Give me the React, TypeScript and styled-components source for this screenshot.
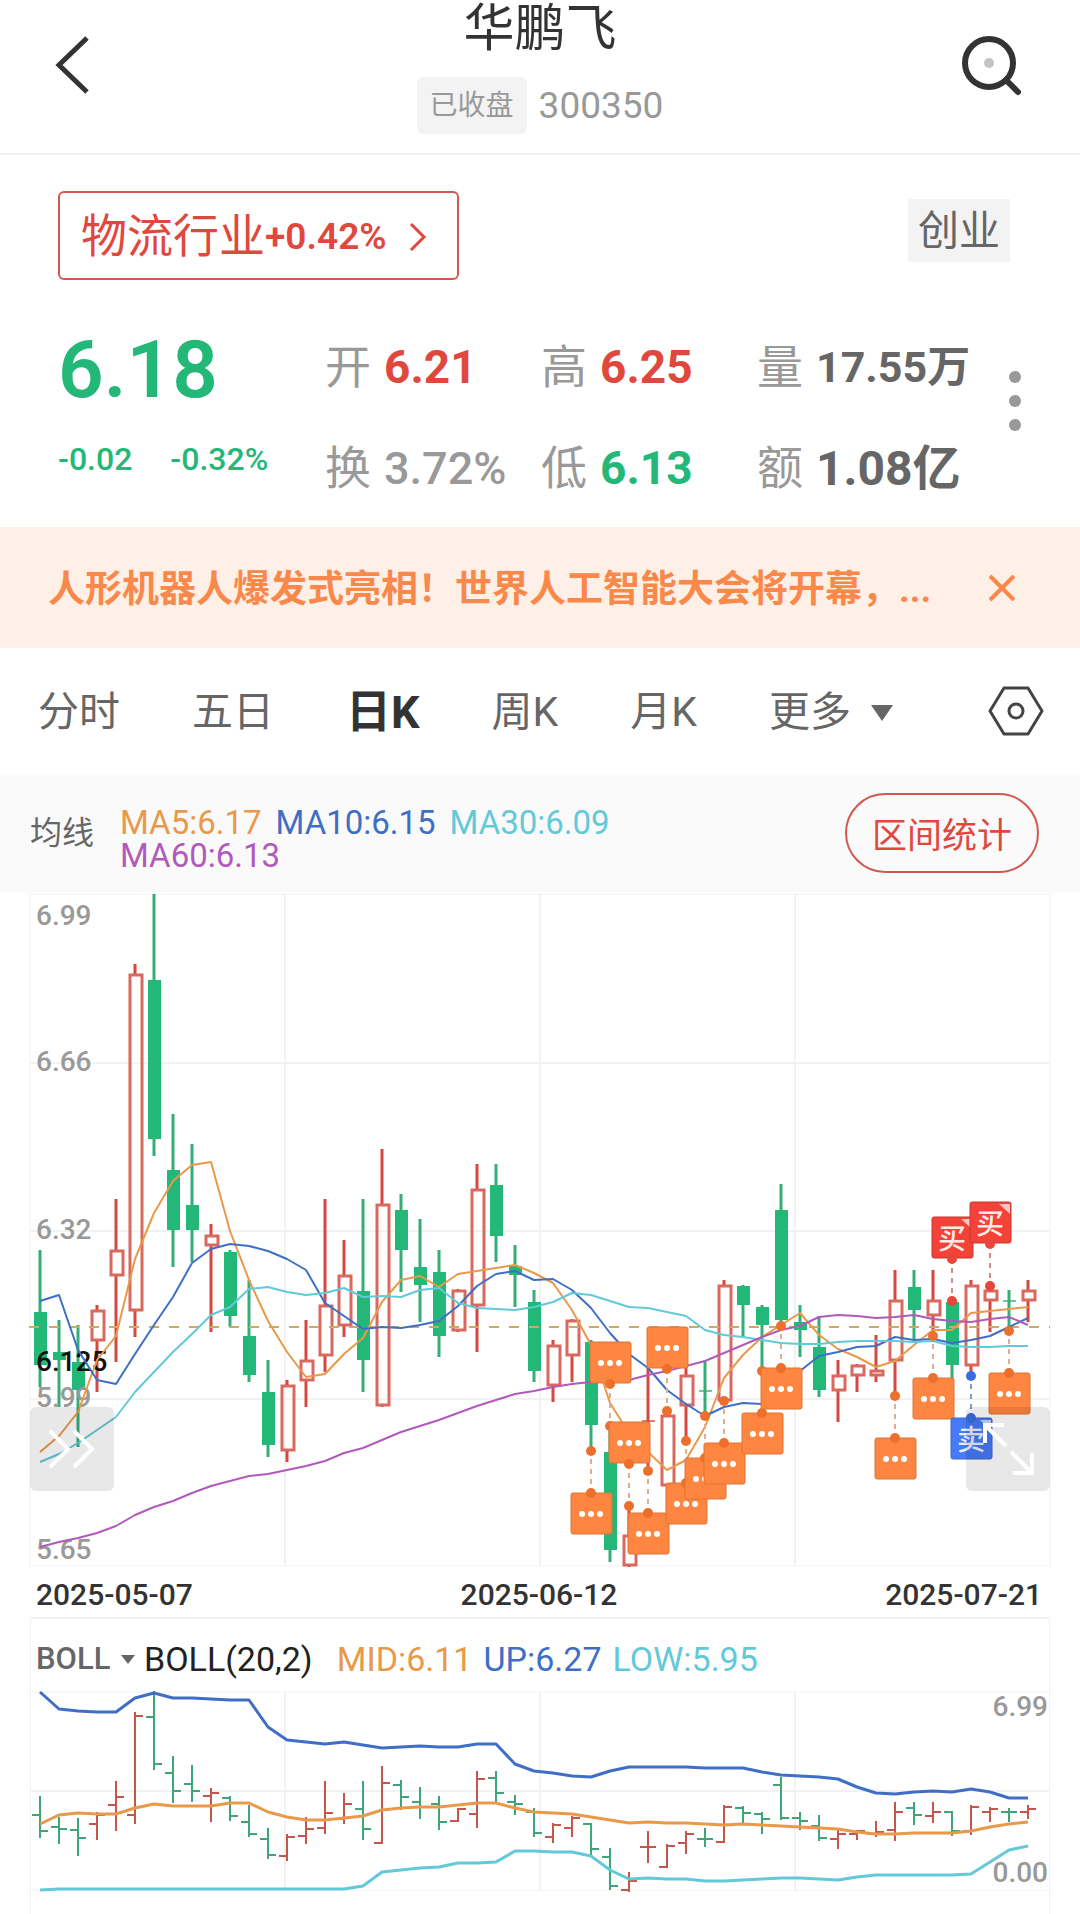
import React from "react";
import styled, { createGlobalStyle } from "styled-components";

const RED = "#e0483e";
const GREEN = "#23b877";
const ORANGE = "#e8994a";
const BLUE = "#3f6fc4";
const CYAN = "#62c9d8";
const PURPLE = "#b15abb";
const GRID = "#f2f2f2";

const textFont = `Roboto, "Noto Sans CJK SC", sans-serif`;

const GlobalStyle = createGlobalStyle`
  *, *::before, *::after { box-sizing: border-box; }
  body { margin: 0; background: #fff; color: #666; font-family: ${textFont}; line-height: 1.2; }
  button, select { margin: 0; padding: 0; border: 0; background: none; color: inherit; font: inherit; cursor: pointer; }
  svg { display: block; }
  h1, p, dl, dd, dt { margin: 0; font-weight: 400; }
`;

/* ---------- header ---------- */

const Header = styled.header`
  display: grid;
  grid-template-columns: 1fr auto 1fr;
  height: 155px;
  border-bottom: 2px solid ${GRID};
`;

const HeaderSide = styled.div<{ $end?: boolean }>`
  display: flex;
  align-items: center;
  justify-content: ${(p) => (p.$end ? "flex-end" : "flex-start")};
  padding: 0 56px 24px 54px;
`;

const TitleBlock = styled.div`
  display: flex;
  flex-direction: column;
  align-items: center;
  gap: 19px;
`;

const Title = styled.h1`
  color: #333;
  font-size: 51px;
  line-height: 58px;
`;

const CodeRow = styled.div`
  display: flex;
  align-items: center;
  gap: 12px;
  color: #999;
  font-size: 37px;
  line-height: 57px;
`;

const StatusBadge = styled.span`
  padding: 0 13px;
  border-radius: 6px;
  background: #f3f3f3;
  font-size: 28px;
`;

/* ---------- quote summary ---------- */

const Summary = styled.section`
  padding: 36px 40px 8px 58px;
`;

const TagRow = styled.div`
  display: flex;
  align-items: flex-start;
  justify-content: space-between;
  margin-bottom: 35px;
  padding-right: 30px;
`;

const IndustryLink = styled.a`
  display: flex;
  align-items: center;
  height: 89px;
  padding: 3px 30px 0 21px;
  border: 2px solid #d2584f;
  border-radius: 6px;
  color: ${RED};
  font-size: 46px;
  text-decoration: none;

  b {
    margin-right: 22px;
    font-size: 37px;
    font-weight: 600;
  }
`;

const BoardTag = styled.span`
  margin-top: 8px;
  padding: 2px 10px 0;
  background: #f3f3f3;
  font-size: 41px;
  line-height: 61px;
`;

const QuoteGrid = styled.div`
  display: grid;
  grid-template-columns: 267fr 216fr 216fr 233fr 50px;
`;

const PriceColumn = styled.div`
  color: ${GREEN};
`;

const Price = styled.p`
  font-size: 80px;
  font-weight: 600;
  line-height: 110px;
`;

const Changes = styled.p`
  display: flex;
  gap: 38px;
  font-size: 32px;
  font-weight: 500;
  line-height: 68px;
`;

const StatColumn = styled.dl`
  padding-top: 2px;
  white-space: nowrap;
`;

const Stat = styled.div`
  display: flex;
  align-items: center;
  gap: 13px;
  height: 101px;
`;

const StatName = styled.dt`
  color: #999;
  font-size: 46px;
`;

const StatValue = styled.dd<{ $color: string; $size?: number; $weight?: number }>`
  color: ${(p) => p.$color};
  font-size: ${(p) => p.$size ?? 46}px;
  font-weight: ${(p) => p.$weight ?? 700};
`;

const MoreButton = styled.button`
  display: flex;
  align-items: center;
  justify-content: center;
  height: 172px;
`;

/* ---------- news banner ---------- */

const Banner = styled.aside`
  display: flex;
  align-items: center;
  justify-content: space-between;
  height: 121px;
  padding: 0 64px 0 48px;
  background: #fff0e7;
  color: #f9884b;
  font-size: 37px;
`;

const BannerText = styled.p`
  padding-top: 6px;
  font-weight: 700;
  white-space: nowrap;
`;

/* ---------- period tabs ---------- */

const Tabs = styled.nav`
  display: flex;
  align-items: center;
  gap: 72px;
  height: 126px;
  padding: 0 36px 0 38px;
`;

const Tab = styled.button<{ $active?: boolean }>`
  display: flex;
  align-items: center;
  gap: 20px;
  padding-top: 4px;
  color: ${(p) => (p.$active ? "#333" : "#666")};
  font-size: ${(p) => (p.$active ? 45 : 41)}px;
  font-weight: ${(p) => (p.$active ? 700 : 400)};
`;

const SettingsButton = styled.button`
  margin-left: auto;
`;

/* ---------- moving averages ---------- */

const AverageBar = styled.section`
  display: flex;
  align-items: center;
  height: 118px;
  padding: 0 41px 0 30px;
  background: #fafafa;
`;

const AverageName = styled.span`
  margin-right: 26px;
  font-size: 32px;
`;

const AverageList = styled.div`
  display: flex;
  flex: 1;
  flex-wrap: wrap;
  column-gap: 14px;
  max-width: 520px;
  padding-top: 12px;
  font-size: 33px;
  line-height: 33px;
`;

const Tinted = styled.span<{ $color: string }>`
  color: ${(p) => p.$color};
`;

const RangeButton = styled.button`
  height: 80px;
  margin-left: auto;
  padding: 8px 25px 0;
  border: 2px solid #d2584f;
  border-radius: 40px;
  color: ${RED};
  font-size: 35px;
`;

/* ---------- charts ---------- */

const ChartArea = styled.section`
  position: relative;
  margin: 2px 30px 0;

  svg.plot { width: 100%; height: auto; overflow: visible; }
`;

const OverlayButton = styled.button<{ $end?: boolean }>`
  position: absolute;
  bottom: 75px;
  ${(p) => (p.$end ? "right: 0;" : "left: 0;")}
  display: flex;
  align-items: center;
  justify-content: center;
  width: 84px;
  height: 84px;
  border-radius: 6px;
  background: rgba(0, 0, 0, 0.09);
`;

const DateRow = styled.div`
  display: flex;
  align-items: center;
  justify-content: space-between;
  height: 51px;
  padding: 7px 38px 0 36px;
  color: #333;
  font-size: 30px;
  font-weight: 500;
`;

const BollPanel = styled.section`
  margin: 0 30px;
  padding-bottom: 24px;
  border: solid ${GRID};
  border-width: 2px 1px 0;

  svg.plot { width: 100%; height: auto; overflow: visible; }
`;

const BollHeader = styled.div`
  display: flex;
  align-items: center;
  height: 72px;
  padding: 8px 0 0 5px;
  font-size: 34px;
`;

const IndicatorPicker = styled.label`
  display: flex;
  align-items: center;
  gap: 8px;
  margin-right: 9px;
`;

const IndicatorSelect = styled.select`
  width: 77px;
  appearance: none;
  color: #666;
  font-size: 31px;
  font-weight: 500;
`;

const Formula = styled.span`
  margin-right: 24px;
  color: #222;
`;

const BollValues = styled.div`
  display: flex;
  gap: 11px;
`;

/* ---------- chart data: high, body top, body bottom, low, direction ---------- */

type Candle = [number, number, number, number, "u" | "d"];

const candles: Candle[] = [
  [1250, 1312, 1365, 1387, "d"], [1320, 1352, 1360, 1407, "d"], [1325, 1362, 1390, 1447, "d"],
  [1305, 1310, 1341, 1392, "u"], [1199, 1250, 1276, 1362, "u"], [964, 974, 1311, 1337, "u"],
  [894, 980, 1139, 1156, "d"], [1114, 1170, 1230, 1267, "d"], [1144, 1205, 1230, 1262, "d"],
  [1224, 1235, 1246, 1332, "u"], [1250, 1252, 1316, 1327, "d"], [1280, 1336, 1375, 1382, "d"],
  [1360, 1392, 1445, 1457, "d"], [1380, 1385, 1451, 1462, "u"], [1320, 1360, 1381, 1407, "u"],
  [1199, 1305, 1356, 1372, "u"], [1240, 1275, 1326, 1337, "u"], [1199, 1291, 1360, 1392, "d"],
  [1149, 1204, 1406, 1407, "u"], [1194, 1210, 1250, 1292, "d"], [1219, 1267, 1285, 1322, "d"],
  [1250, 1272, 1336, 1357, "d"], [1289, 1290, 1331, 1332, "u"], [1164, 1189, 1306, 1352, "u"],
  [1164, 1185, 1236, 1262, "d"], [1245, 1266, 1275, 1307, "d"], [1290, 1302, 1371, 1382, "d"],
  [1340, 1345, 1386, 1402, "u"], [1319, 1320, 1356, 1382, "u"], [1340, 1342, 1425, 1451, "d"],
  [1426, 1452, 1550, 1562, "d"], [1506, 1535, 1566, 1567, "u"], [1368, 1421, 1421, 1471, "u"],
  [1411, 1415, 1486, 1486, "u"], [1367, 1375, 1406, 1441, "u"], [1360, 1391, 1391, 1416, "d"],
  [1280, 1285, 1401, 1401, "u"], [1285, 1286, 1305, 1337, "d"], [1305, 1307, 1325, 1371, "d"],
  [1184, 1210, 1320, 1326, "d"], [1305, 1322, 1330, 1357, "d"], [1316, 1347, 1390, 1397, "d"],
  [1360, 1375, 1391, 1422, "u"], [1364, 1365, 1376, 1392, "u"], [1335, 1370, 1376, 1382, "u"],
  [1270, 1300, 1361, 1396, "u"], [1270, 1287, 1310, 1340, "d"], [1270, 1300, 1316, 1336, "u"],
  [1301, 1302, 1365, 1380, "d"], [1280, 1285, 1366, 1376, "u"], [1286, 1290, 1301, 1332, "u"],
  [1290, 1301, 1301, 1331, "d"], [1280, 1290, 1301, 1322, "u"],
];

const ma5 = [1452, 1436, 1412, 1360, 1336, 1259, 1213, 1181, 1165, 1162, 1231, 1280, 1321, 1352, 1377, 1374, 1354, 1338, 1302, 1280, 1276, 1287, 1274, 1271, 1268, 1265, 1273, 1283, 1310, 1345, 1403, 1433, 1452, 1470, 1460, 1427, 1378, 1355, 1337, 1325, 1313, 1335, 1349, 1357, 1367, 1361, 1345, 1330, 1330, 1313, 1311, 1309, 1307];
const ma10 = [1301, 1295, 1350, 1380, 1384, 1354, 1325, 1297, 1263, 1249, 1244, 1246, 1251, 1259, 1270, 1303, 1316, 1329, 1327, 1328, 1325, 1321, 1306, 1286, 1274, 1271, 1280, 1279, 1290, 1308, 1333, 1354, 1368, 1390, 1404, 1416, 1407, 1403, 1404, 1389, 1371, 1356, 1352, 1347, 1346, 1337, 1340, 1339, 1343, 1340, 1336, 1327, 1318];
const ma30 = [1462, 1454, 1443, 1430, 1417, 1392, 1372, 1352, 1334, 1315, 1307, 1289, 1287, 1292, 1295, 1293, 1288, 1297, 1296, 1297, 1290, 1288, 1303, 1308, 1309, 1310, 1307, 1302, 1293, 1295, 1301, 1307, 1308, 1312, 1316, 1330, 1335, 1337, 1340, 1343, 1344, 1344, 1342, 1341, 1341, 1341, 1342, 1341, 1346, 1347, 1347, 1346, 1346];
const ma60 = [1547, 1542, 1538, 1533, 1526, 1515, 1507, 1501, 1493, 1486, 1481, 1476, 1474, 1470, 1466, 1461, 1453, 1448, 1440, 1432, 1426, 1420, 1413, 1406, 1400, 1394, 1391, 1387, 1384, 1382, 1382, 1380, 1375, 1371, 1366, 1361, 1353, 1345, 1337, 1330, 1326, 1317, 1315, 1316, 1318, 1317, 1315, 1319, 1321, 1322, 1319, 1317, 1325];

/* band values, measured from the top of the BOLL plot */
const bollUp = [1, 18, 20, 21, 21, 7, 2, 7, 7, 8, 9, 9, 36, 49, 51, 53, 51, 54, 57, 56, 55, 56, 56, 53, 53, 73, 80, 82, 85, 86, 80, 76, 76, 76, 76, 77, 77, 77, 81, 84, 85, 86, 88, 96, 102, 103, 101, 100, 101, 98, 101, 107, 107];
const bollMid = [133, 124, 122, 123, 123, 117, 113, 115, 115, 115, 112, 112, 121, 126, 129, 129, 127, 125, 119, 117, 116, 116, 114, 112, 112, 117, 121, 122, 123, 126, 129, 132, 131, 132, 132, 133, 134, 133, 134, 135, 136, 137, 138, 141, 143, 143, 142, 142, 142, 140, 136, 133, 131];
const bollLow = [199, 198, 198, 198, 198, 198, 198, 198, 198, 198, 198, 198, 198, 198, 198, 198, 198, 195, 181, 179, 177, 176, 172, 172, 171, 160, 160, 161, 161, 165, 179, 188, 187, 188, 188, 190, 190, 189, 188, 187, 187, 188, 189, 186, 184, 184, 184, 184, 184, 183, 171, 159, 155];

type Kind = "note" | "buy" | "sell";
/* day index, anchor on the candle, whether the flag hangs above it */
const markers: { day: number; anchor: number; above?: boolean; kind: Kind }[] = [
  { day: 29, anchor: 1451, kind: "note" },
  { day: 30, anchor: 1426, above: true, kind: "note" },
  { day: 31, anchor: 1506, above: true, kind: "note" },
  { day: 32, anchor: 1471, kind: "note" },
  { day: 33, anchor: 1411, above: true, kind: "note" },
  { day: 34, anchor: 1441, kind: "note" },
  { day: 35, anchor: 1416, kind: "note" },
  { day: 36, anchor: 1401, kind: "note" },
  { day: 38, anchor: 1371, kind: "note" },
  { day: 39, anchor: 1326, kind: "note" },
  { day: 45, anchor: 1396, kind: "note" },
  { day: 47, anchor: 1336, kind: "note" },
  { day: 48, anchor: 1301, above: true, kind: "buy" },
  { day: 49, anchor: 1376, kind: "sell" },
  { day: 50, anchor: 1286, above: true, kind: "buy" },
  { day: 51, anchor: 1331, kind: "note" },
];

const fills: Record<Kind, string> = { note: "#ff8640", buy: "#f34237", sell: "#467bf5" };
const edges: Record<Kind, string> = { note: "#dd7436", buy: "#c8372e", sell: "#3b68cf" };
const dots: Record<Kind, string> = { note: "#ec6f2b", buy: "#e8453b", sell: "#3a6de0" };
const strings: Record<Kind, string> = { note: "#dfae92", buy: "#d68a85", sell: "#7d9be0" };

const dayX = (i: number) => 40 + i * 19;
const toPoints = (ys: number[]) => ys.map((y, i) => `${dayX(i)},${y}`).join(" ");
const bollY = (y: number) => Math.round(1 + (y - 894) * 0.295);

function CandleMark({ data, x }: { data: Candle; x: number }) {
  const [high, top, bottom, low, dir] = data;
  const color = dir === "u" ? "#d6483f" : "#34ad78";
  if (top === bottom) {
    return (
      <g stroke={color}>
        <path d={`M${x} ${high}V${low}`} strokeWidth={3} />
        <path d={`M${x - 6} ${top}H${x + 7}`} strokeWidth={2} opacity={0.7} />
      </g>
    );
  }
  if (dir === "d") {
    return (
      <g>
        <path d={`M${x} ${high}V${low}`} stroke={color} strokeWidth={3} />
        <rect x={x - 6} y={top} width={13} height={bottom - top} fill={GREEN} />
      </g>
    );
  }
  return (
    <g>
      <path d={`M${x} ${high}V${top + 2}M${x} ${bottom - 2}V${low}`} stroke={color} strokeWidth={3} />
      <rect x={x - 5} y={top + 1} width={12} height={bottom - top - 2} fill="none" stroke="#d9695f" strokeWidth={3} />
    </g>
  );
}

function Marker({ day, anchor, above, kind }: { day: number; anchor: number; above?: boolean; kind: Kind }) {
  const x = dayX(day);
  const near = above ? anchor - 42 : anchor + 42;
  const top = above ? near - 42 : near;
  return (
    <g>
      <path d={`M${x} ${anchor + (above ? -8 : 8)}V${near}`} stroke={strings[kind]} strokeWidth={2} strokeDasharray="5 5" />
      <circle cx={x} cy={anchor} r={5} fill={dots[kind]} />
      <rect x={x - 20} y={top} width={41} height={41} rx={2} fill={fills[kind]} stroke={edges[kind]} />
      <circle cx={x} cy={near} r={5} fill={dots[kind]} />
      {kind === "note" ? (
        <g fill="#fff">
          <circle cx={x - 9} cy={top + 21} r={3} />
          <circle cx={x} cy={top + 21} r={3} />
          <circle cx={x + 9} cy={top + 21} r={3} />
        </g>
      ) : (
        <g fill="#fff">
          <path d={`M${x + 9} ${top + 2}H${x + 20}V${top + 12}Z`} opacity={0.7} />
          <text x={x} y={top + 32} textAnchor="middle" fontSize={28} fontWeight={500} fillOpacity={0.9}>
            {kind === "buy" ? "买" : "卖"}
          </text>
        </g>
      )}
    </g>
  );
}

const priceLabels = [
  { text: "6.99", y: 925 },
  { text: "6.66", y: 1071 },
  { text: "6.32", y: 1239 },
  { text: "5.99", y: 1407 },
  { text: "5.65", y: 1559 },
];

function CandleChart() {
  return (
    <svg className="plot" viewBox="30 894 1020 672" role="img" aria-label="日K线图">
      <path d="M30 894H1050V1566H30Z" fill="none" stroke={GRID} />
      <path d="M30 1063H1050M30 1231H1050M30 1399H1050M285 894V1566M540 894V1566M795 894V1566" stroke={GRID} strokeWidth={2} />
      {candles.map((c, i) => (
        <CandleMark key={i} data={c} x={dayX(i)} />
      ))}
      <path d="M29 1327H1050" stroke="#c9ab68" strokeWidth={2} strokeDasharray="10 10" />
      <g fontSize={28} fontWeight={500} fill="#999">
        {priceLabels.map((l) => (
          <text key={l.text} x={36} y={l.y}>{l.text}</text>
        ))}
        <text x={36} y={1371} fill="#111">6.125</text>
      </g>
      <g fill="none" strokeWidth={2} strokeLinejoin="round">
        <polyline points={toPoints(ma5)} stroke={ORANGE} />
        <polyline points={toPoints(ma10)} stroke={BLUE} />
        <polyline points={toPoints(ma30)} stroke={CYAN} />
        <polyline points={toPoints(ma60)} stroke={PURPLE} />
      </g>
      {markers.map((m) => (
        <Marker key={m.day} {...m} />
      ))}
    </svg>
  );
}

function BollChart() {
  return (
    <svg className="plot" viewBox="31 0 1018 200" role="img" aria-label="BOLL">
      <path d="M31 1H1049M31 199H1049" stroke={GRID} />
      <path d="M31 100H1049M285 1V199M540 1V199M795 1V199" stroke={GRID} strokeWidth={2} />
      {candles.map(([high, top, bottom, low, dir], i) => {
        const x = dayX(i);
        const open = bollY(dir === "u" ? bottom : top);
        const close = bollY(dir === "u" ? top : bottom);
        return (
          <path
            key={i}
            d={`M${x} ${bollY(high) - 1}V${bollY(low) + 1}M${x - 8} ${open}H${x}M${x} ${close}H${x + 8}`}
            stroke={dir === "u" ? "#c4574d" : "#3fa578"}
            strokeWidth={2}
          />
        );
      })}
      <g fill="none" strokeWidth={3} strokeLinejoin="round">
        <polyline points={toPoints(bollUp)} stroke={BLUE} />
        <polyline points={toPoints(bollMid)} stroke={ORANGE} />
        <polyline points={toPoints(bollLow)} stroke={CYAN} />
      </g>
      <g fontSize={28} fontWeight={500} fill="#999" textAnchor="end">
        <text x={1048} y={25}>6.99</text>
        <text x={1048} y={191}>0.00</text>
      </g>
    </svg>
  );
}

export default function App() {
  return (
    <>
      <GlobalStyle />
      <Header>
        <HeaderSide>
          <button aria-label="返回">
            <svg width="36" height="60" viewBox="0 0 36 60" fill="none" stroke="#333" strokeWidth="5">
              <path d="M33 3L5 30L33 57" />
            </svg>
          </button>
        </HeaderSide>
        <TitleBlock>
          <Title>华鹏飞</Title>
          <CodeRow>
            <StatusBadge>已收盘</StatusBadge>
            <span>300350</span>
          </CodeRow>
        </TitleBlock>
        <HeaderSide $end>
          <button aria-label="搜索">
            <svg width="64" height="64" viewBox="0 0 64 64" fill="none" stroke="#333" strokeWidth="6">
              <circle cx="29" cy="30" r="24" />
              <path d="M46 47L58 59" strokeLinecap="round" />
              <circle cx="29" cy="30" r="5" fill="#c4c4c4" stroke="none" />
            </svg>
          </button>
        </HeaderSide>
      </Header>

      <Summary>
        <TagRow>
          <IndustryLink href="#industry">
            物流行业<b>+0.42%</b>
            <svg width="18" height="30" viewBox="0 0 18 30" fill="none" stroke={RED} strokeWidth="3">
              <path d="M2 2L15 15L2 28" />
            </svg>
          </IndustryLink>
          <BoardTag>创业</BoardTag>
        </TagRow>
        <QuoteGrid>
          <PriceColumn>
            <Price>6.18</Price>
            <Changes>
              <span>-0.02</span>
              <span>-0.32%</span>
            </Changes>
          </PriceColumn>
          <StatColumn>
            <Stat><StatName>开</StatName><StatValue $color={RED}>6.21</StatValue></Stat>
            <Stat><StatName>换</StatName><StatValue $color="#999" $size={45} $weight={500}>3.72%</StatValue></Stat>
          </StatColumn>
          <StatColumn>
            <Stat><StatName>高</StatName><StatValue $color={RED}>6.25</StatValue></Stat>
            <Stat><StatName>低</StatName><StatValue $color={GREEN}>6.13</StatValue></Stat>
          </StatColumn>
          <StatColumn>
            <Stat><StatName>量</StatName><StatValue $color="#666" $size={43}>17.55万</StatValue></Stat>
            <Stat><StatName>额</StatName><StatValue $color="#666" $size={48}>1.08亿</StatValue></Stat>
          </StatColumn>
          <MoreButton aria-label="更多行情">
            <svg width="14" height="62" viewBox="0 0 14 62" fill="#999">
              <circle cx="7" cy="7" r="6" />
              <circle cx="7" cy="31" r="6" />
              <circle cx="7" cy="55" r="6" />
            </svg>
          </MoreButton>
        </QuoteGrid>
      </Summary>

      <Banner>
        <BannerText>人形机器人爆发式亮相！世界人工智能大会将开幕，...</BannerText>
        <button aria-label="关闭">
          <svg width="28" height="28" viewBox="0 0 28 28" stroke="#f9884b" strokeWidth="4">
            <path d="M2 2L26 26M26 2L2 26" />
          </svg>
        </button>
      </Banner>

      <Tabs>
        <Tab>分时</Tab>
        <Tab>五日</Tab>
        <Tab $active aria-current="true">日K</Tab>
        <Tab>周K</Tab>
        <Tab>月K</Tab>
        <Tab aria-haspopup="menu">
          更多
          <svg width="22" height="16" viewBox="0 0 22 16" fill="#666">
            <path d="M0 0H22L11 16Z" />
          </svg>
        </Tab>
        <SettingsButton aria-label="图表设置">
          <svg width="56" height="50" viewBox="0 0 56 50" fill="none" stroke="#444" strokeWidth="3">
            <path d="M16 2H40L54 25L40 48H16L2 25Z" strokeLinejoin="round" />
            <circle cx="28" cy="25" r="7" />
          </svg>
        </SettingsButton>
      </Tabs>

      <AverageBar>
        <AverageName>均线</AverageName>
        <AverageList>
          <Tinted $color={ORANGE}>MA5:6.17</Tinted>
          <Tinted $color={BLUE}>MA10:6.15</Tinted>
          <Tinted $color={CYAN}>MA30:6.09</Tinted>
          <Tinted $color={PURPLE}>MA60:6.13</Tinted>
        </AverageList>
        <RangeButton>区间统计</RangeButton>
      </AverageBar>

      <ChartArea>
        <CandleChart />
        <OverlayButton aria-label="前进">
          <svg width="48" height="40" viewBox="0 0 48 40" fill="none" stroke="#fff" strokeWidth="4">
            <path d="M2 2L20 20L2 38M26 2L44 20L26 38" />
          </svg>
        </OverlayButton>
        <OverlayButton $end aria-label="全屏">
          <svg width="52" height="54" viewBox="0 0 52 54" fill="none" stroke="#fff" strokeWidth="4">
            <path d="M22 3H3V21M3 3L24 24M29 30L50 51M50 31V51H31" />
          </svg>
        </OverlayButton>
      </ChartArea>

      <DateRow>
        <time>2025-05-07</time>
        <time>2025-06-12</time>
        <time>2025-07-21</time>
      </DateRow>

      <BollPanel>
        <BollHeader>
          <IndicatorPicker>
            <IndicatorSelect aria-label="指标" defaultValue="BOLL">
              <option>BOLL</option>
              <option>KDJ</option>
              <option>RSI</option>
            </IndicatorSelect>
            <svg width="14" height="9" viewBox="0 0 14 9" fill="#666">
              <path d="M0 0H14L7 9Z" />
            </svg>
          </IndicatorPicker>
          <Formula>BOLL(20,2)</Formula>
          <BollValues>
            <Tinted $color={ORANGE}>MID:6.11</Tinted>
            <Tinted $color={BLUE}>UP:6.27</Tinted>
            <Tinted $color={CYAN}>LOW:5.95</Tinted>
          </BollValues>
        </BollHeader>
        <BollChart />
      </BollPanel>
    </>
  );
}
